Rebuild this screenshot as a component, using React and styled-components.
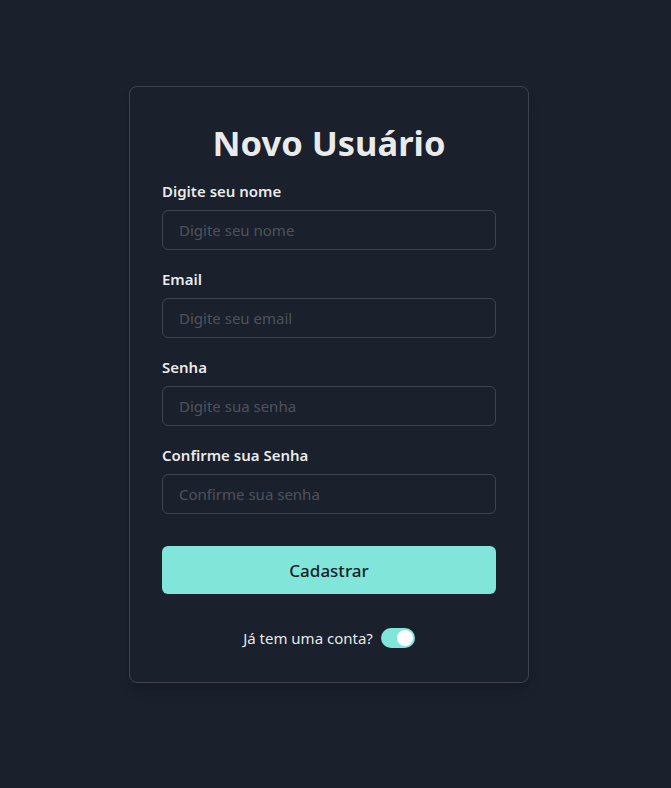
import React, { useState } from "react";
import styled, { createGlobalStyle } from "styled-components";

const Global = createGlobalStyle`
  html, body { margin: 0; padding: 0; background: #1A202C; }
  body { font-family: "Noto Sans", "Open Sans", sans-serif; color: rgba(255,255,255,0.92); }
  * { box-sizing: border-box; }
`;

const Page = styled.div`
  min-height: 788px;
  padding-top: 86px;
  padding-left: 129px;
`;

const Card = styled.form`
  width: 400px;
  border: 1px solid rgba(255,255,255,0.16);
  border-radius: 8px;
  padding: 32px 32px 34px;
  box-shadow: 0 10px 15px -3px rgba(0,0,0,0.1), 0 4px 6px -2px rgba(0,0,0,0.05);
  display: flex;
  flex-direction: column;
`;

const Title = styled.h1`
  margin: 0 0 13px;
  text-align: center;
  font-size: 34.5px;
  line-height: 48px;
  font-weight: 700;
  color: rgba(255,255,255,0.92);
`;

const Field = styled.div`
  display: flex;
  flex-direction: column;
  margin-bottom: 18px;
`;

const Label = styled.label`
  font-size: 15px;
  line-height: 22px;
  font-weight: 600;
  margin-bottom: 8px;
  color: rgba(255,255,255,0.92);
`;

const Input = styled.input`
  height: 40px;
  padding: 0 16px;
  border: 1px solid rgba(255,255,255,0.16);
  border-radius: 6px;
  background: transparent;
  font-family: inherit;
  font-size: 15px;
  color: rgba(255,255,255,0.92);
  outline: none;
  &::placeholder { color: rgba(255,255,255,0.24); }
`;

const Button = styled.button`
  margin-top: 14px;
  height: 48px;
  border: none;
  border-radius: 6px;
  background: #81E6D9;
  color: #1A202C;
  font-family: inherit;
  font-size: 17px;
  font-weight: 500;
  cursor: pointer;
`;

const Footer = styled.div`
  margin-top: 34px;
  display: flex;
  align-items: center;
  justify-content: center;
  gap: 8px;
  font-size: 15px;
  line-height: 20px;
`;

const Track = styled.span`
  width: 34px;
  height: 20px;
  border-radius: 10px;
  padding: 2px;
  background: ${p => (p.$on ? "#81E6D9" : "rgba(255,255,255,0.24)")};
  display: flex;
  justify-content: ${p => (p.$on ? "flex-end" : "flex-start")};
  cursor: pointer;
`;

const Thumb = styled.span`
  width: 16px;
  height: 16px;
  border-radius: 50%;
  background: #fff;
`;

const fields = [
  ["Digite seu nome", "Digite seu nome", "text"],
  ["Email", "Digite seu email", "email"],
  ["Senha", "Digite sua senha", "password"],
  ["Confirme sua Senha", "Confirme sua senha", "password"],
];

export default function App() {
  const [on, setOn] = useState(true);
  return (
    <>
      <Global />
      <Page>
        <Card onSubmit={e => e.preventDefault()}>
          <Title>Novo Usuário</Title>
          {fields.map(([l, p, t]) => (
            <Field key={l}>
              <Label>{l}</Label>
              <Input type={t} placeholder={p} />
            </Field>
          ))}
          <Button type="submit">Cadastrar</Button>
          <Footer>
            <span>Já tem uma conta?</span>
            <Track $on={on} onClick={() => setOn(!on)}><Thumb /></Track>
          </Footer>
        </Card>
      </Page>
    </>
  );
}
